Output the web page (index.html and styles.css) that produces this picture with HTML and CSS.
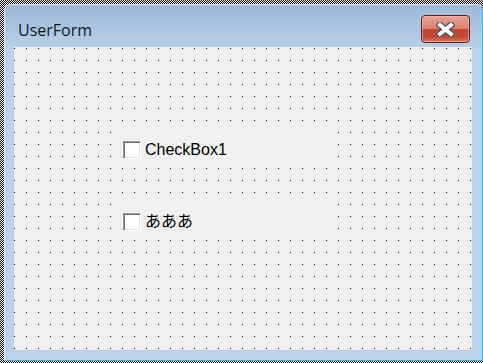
FILE: index.html
```html
<!DOCTYPE html>
<html lang="ja">
<head>
    <meta charset="UTF-8">
    <meta name="viewport" content="width=device-width, initial-scale=1.0">
    <title>UserForm</title>
    <link rel="stylesheet" href="styles.css">
</head>
<body>
    <div class="window">
        <div class="titlebar">
            <span class="title">UserForm</span>
            <button class="close" type="button">
                <svg width="19" height="15" viewBox="0 0 19 15">
                    <path d="M4 3 L15 12 M15 3 L4 12" stroke="#4b4f5c" stroke-width="6.5" stroke-linecap="square" fill="none"/>
                    <path d="M4 3 L15 12 M15 3 L4 12" stroke="#fff" stroke-width="4" stroke-linecap="square" fill="none"/>
                </svg>
            </button>
        </div>
        <div class="client">
            <div class="controls">
                <label class="check">
                    <span class="box"></span>
                    <span class="caption">CheckBox1</span>
                </label>
                <label class="check">
                    <span class="box"></span>
                    <span class="caption">あああ</span>
                </label>
            </div>
        </div>
    </div>
</body>
</html>
```

FILE: styles.css
```css
html, body {
    margin: 0;
    padding: 0;
}
body {
    width: 483px;
    height: 363px;
    overflow: hidden;
    background: repeating-conic-gradient(#000 0 25%, #fff 0 50%) 0 0 / 2px 2px;
    font-family: "Liberation Sans", Arial, sans-serif;
}
.window {
    box-sizing: border-box;
    width: 479px;
    height: 357px;
    margin: 4px 0 0 4px;
    padding: 0 10px 10px 9px;
    background: #b9d1ea;
    border: 1px solid;
    border-color: #dfe8f2 #3cb4e4 #3cb4e4 #dfe8f2;
    border-radius: 6px 6px 0 0;
}
.titlebar {
    height: 42px;
    margin: 0 -10px 0 -9px;
    padding: 10px 12px 0 13px;
    box-sizing: border-box;
    display: flex;
    justify-content: space-between;
    align-items: flex-start;
    background: linear-gradient(#9fb9d5, #b8cfe8);
    border-radius: 5px 5px 0 0;
}
.title {
    margin-top: 5px;
    font-family: "Open Sans", "Noto Sans", sans-serif;
    font-size: 16px;
    line-height: 20px;
    color: #101828;
}
.close {
    width: 49px;
    height: 28px;
    padding: 0;
    border: 1px solid #5e2222;
    border-radius: 4px;
    background: linear-gradient(#e9a295 0%, #d9806f 48%, #c2432e 50%, #c44a35 80%, #d77a5e 100%);
    box-shadow: inset 0 0 0 1px rgba(255, 200, 190, 0.5);
    display: flex;
    align-items: center;
    justify-content: center;
}
.close svg {
    display: block;
}
.client {
    width: 458px;
    height: 303px;
    box-sizing: border-box;
    padding: 85px 0 0 108px;
    background-color: #f0f0f0;
    background-image: conic-gradient(from 270deg at 1px 1px, #000 90deg, transparent 0);
    background-size: 12px 12px;
    background-position: 0 1px;
}
.controls {
    display: flex;
    flex-direction: column;
    gap: 36px;
}
.check {
    width: 216px;
    height: 36px;
    display: flex;
    align-items: center;
    background: #f0f0f0;
}
.box {
    box-sizing: border-box;
    width: 18px;
    height: 18px;
    margin-left: 1px;
    background: #fff;
    border: 1px solid;
    border-color: #a0a0a0 #fff #fff #a0a0a0;
    box-shadow: inset 1px 1px #696969, inset -1px -1px #e3e3e3;
}
.caption {
    margin-left: 4px;
    font-size: 16px;
    line-height: 18px;
    color: #000;
    font-family: "Liberation Sans", "Noto Sans CJK JP", sans-serif;
}
```
